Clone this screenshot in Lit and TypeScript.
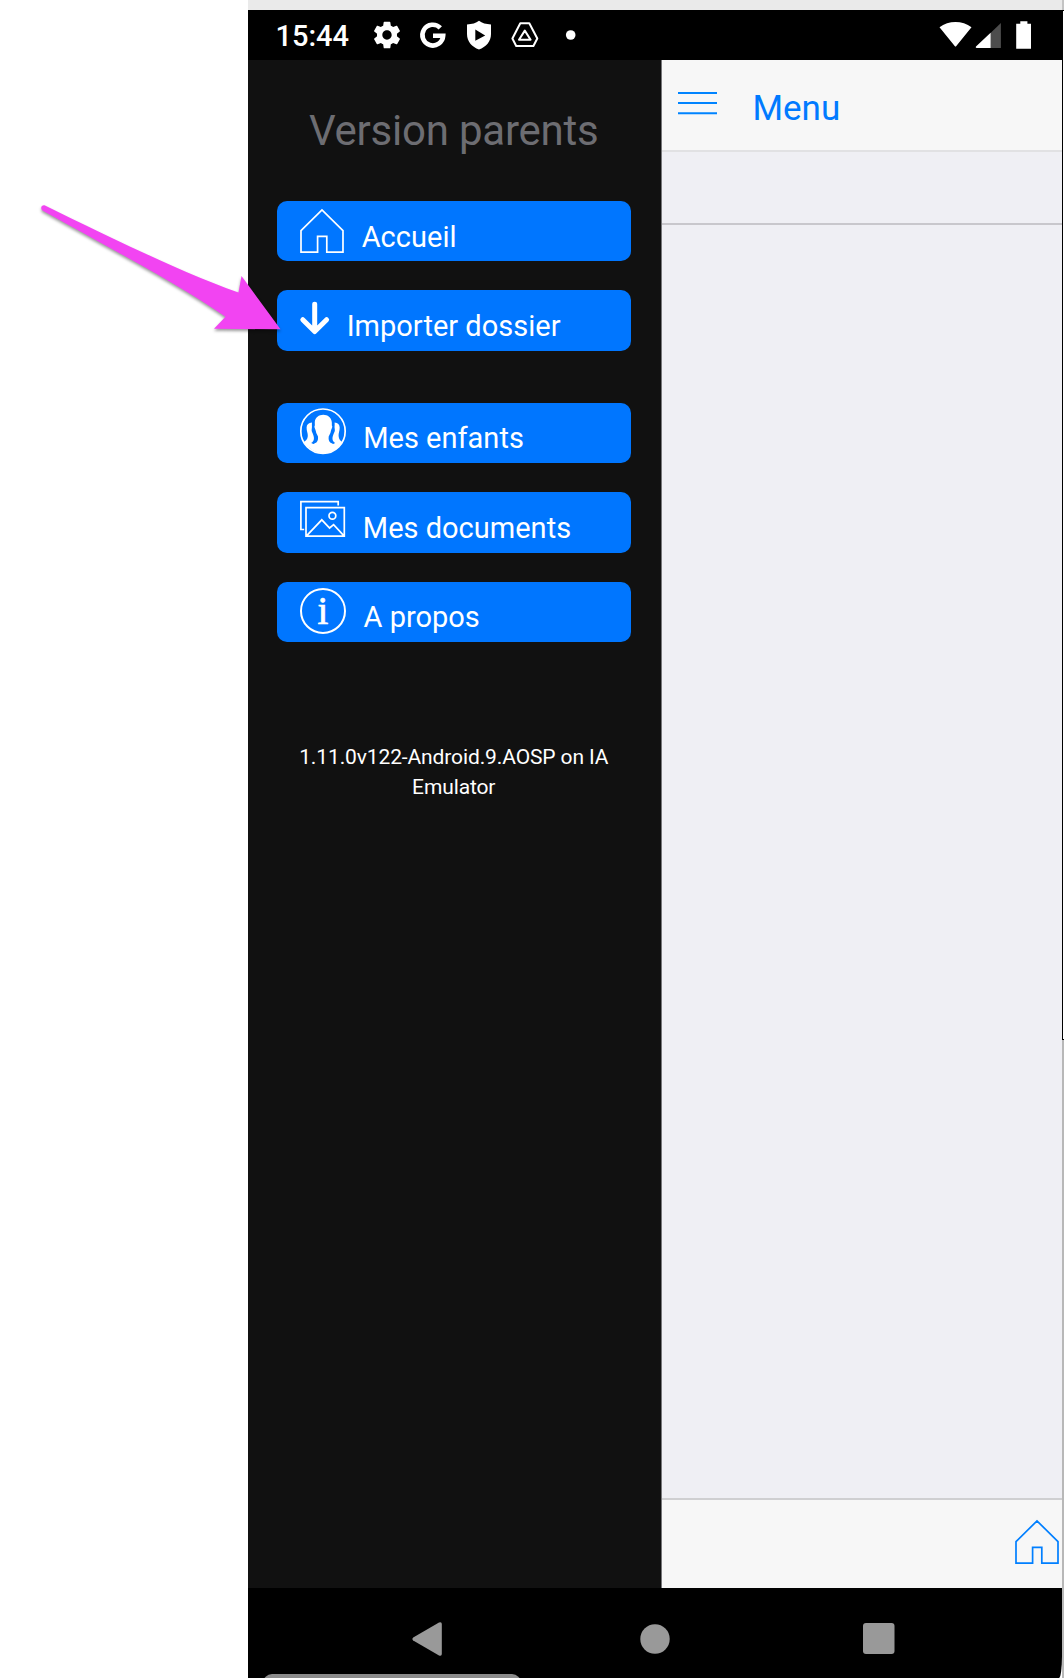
import { LitElement, html, svg, css } from "lit";
import { customElement } from "lit/decorators.js";

const HOME = "M1 29.6L22 8.9L43 29.6V51.2H26.8V35.4H17.6V51.2H1Z";

const icons = {
  home: svg`<path class="line" d=${HOME} />`,
  down: svg`<path class="bold" d="M14.7 14.2V41M2.8 29.7L14.7 41.6L26.6 29.7" />`,
  people: svg`
    <circle class="line" cx="23" cy="28.2" r="22.2" />
    <path class="fill" d="M23.3 11.7C19 11.7 15 14.5 14.8 19C14.7 21 15.2 22.5 14.4 23.6C14.6 25.6 15.4 26 15.8 28C16.3 31 17.6 32 18 33.6C18.3 36.5 17.8 38.2 16.4 39.4C13.6 41.2 11.6 41 8.6 43.9C16 51.9 30.5 52.2 38 43.9C35 41 33 41.2 30.2 39.4C28.8 38.2 28.4 36.5 28.7 33.6C29.2 32 30.4 31 30.9 28C31.3 26 32.1 25.6 32.3 23.6C31.6 22.5 32 21 31.8 19C31.4 14.5 27.6 11.7 23.3 11.7Z" />
    <path class="fill" d="M12 19.6C8.6 19.7 6.6 21.6 6.6 24.5C6.5 28 8 30 7.8 33C7.7 36.4 5.5 38 3.3 39.6L8.2 44.3C10 43.9 13 42.8 14.8 41.4C12.5 40.8 11.4 40.4 11.4 39.8C14.3 38.3 14.4 35 13.3 32C12.3 29 11.2 28.4 11.8 25.6C12.2 24 11.7 22.2 12 19.6Z" />
    <path class="fill" d="M34.6 19.6C38 19.7 39.6 21.6 39.7 24.5C39.7 28 38.4 30 38.6 33C38.8 36.4 40.6 38 42.8 39.6L38 44.3C36.2 43.9 33.6 42.8 31.8 41.4C34 40.8 35 40.4 35 39.8C32.2 38.3 32 35 33.2 32C34.3 29 35.3 28.4 34.7 25.6C34.3 24 34.9 22.2 34.6 19.6Z" />`,
  pictures: svg`
    <path class="line" d="M4.2 37.5H.9V9.7H38.2V13.6" />
    <path class="line" d="M6 15.6H44.3V44.2H6ZM6.5 43.8L21.8 27.8L29.6 36L33.6 32.6L44 43.8" />
    <circle class="line" cx="32.4" cy="23.7" r="3.4" />`,
  info: svg`
    <circle class="line thick" cx="23" cy="28.9" r="22" />
    <text class="letter" x="23" y="41.8">i</text>`,
};

@customElement("menu-button")
class MenuButton extends LitElement {
  static properties = { icon: {}, label: {}, span: { type: Number } };
  declare icon: keyof typeof icons;
  declare label: string;
  declare span: number;

  static styles = css`
    :host { display: block; }
    .button {
      display: flex; align-items: flex-start; gap: 18px; box-sizing: border-box;
      width: 100%; height: 60.3px; padding: 0 0 0 23px; border: 0; border-radius: 10px;
      background: #0076ff; color: #fff; text-align: left;
      font: 400 29px/34px Roboto, sans-serif; letter-spacing: 0.01px;
    }
    .label { padding-top: 18.7px; white-space: nowrap; }
    .icon { display: block; flex: none; height: 60px; overflow: visible; }
    .line { fill: none; stroke: #fff; stroke-width: 1.7; }
    .thick { stroke-width: 2; }
    .bold { fill: none; stroke: #fff; stroke-width: 5; stroke-linecap: round; stroke-linejoin: round; }
    .fill { fill: #fff; }
    .letter { font: 39px "Liberation Serif", serif; fill: #fff; stroke: #fff; stroke-width: 0.7; text-anchor: middle; letter-spacing: 0; }
  `;

  render() {
    return html`<button class="button">
      <svg class="icon" width=${this.span} height="60" viewBox="0 0 ${this.span} 60">${icons[this.icon]}</svg>
      <span class="label">${this.label}</span>
    </button>`;
  }
}

@customElement("status-bar")
class StatusBar extends LitElement {
  static styles = css`
    :host { display: flex; align-items: center; height: 50px; background: #000; color: #fff; }
    .time { width: 95px; padding: 2px 0 0 27.5px; font: 500 29px/34px Roboto, sans-serif; }
    .left { display: flex; gap: 14px; flex: 1; }
    .right { display: flex; padding-right: 31px; }
    svg { display: block; fill: #fff; }
    .ring { fill: none; stroke: #fff; stroke-width: 4.6; }
    .thin { fill: none; stroke: #fff; stroke-width: 2; stroke-linejoin: round; }
    .dim { fill: #4d4d4d; }
    .dark { fill: #000; }
  `;

  render() {
    return html`
      <span class="time">15:44</span>
      <div class="left">
        <svg width="32" height="32" viewBox="0 0 24 24"><path d="M19.43 12.98c.04-.32.07-.64.07-.98s-.03-.66-.07-.98l2.11-1.65c.19-.15.24-.42.12-.64l-2-3.46c-.12-.22-.39-.3-.61-.22l-2.49 1c-.52-.4-1.08-.73-1.69-.98l-.38-2.65C14.46 2.18 14.25 2 14 2h-4c-.25 0-.46.18-.49.42l-.38 2.65c-.61.25-1.17.59-1.69.98l-2.49-1c-.23-.09-.49 0-.61.22l-2 3.46c-.13.22-.07.49.12.64l2.11 1.65c-.04.32-.07.65-.07.98s.03.66.07.98l-2.11 1.65c-.19.15-.24.42-.12.64l2 3.46c.12.22.39.3.61.22l2.49-1c.52.4 1.08.73 1.69.98l.38 2.65c.03.24.24.42.49.42h4c.25 0 .46-.18.49-.42l.38-2.65c.61-.25 1.17-.59 1.69-.98l2.49 1c.23.09.49 0 .61-.22l2-3.46c.12-.22.07-.49-.12-.64l-2.11-1.65zM12 15.5c-1.93 0-3.5-1.57-3.5-3.5s1.57-3.5 3.5-3.5 3.5 1.57 3.5 3.5-1.57 3.5-3.5 3.5z" /></svg>
        <svg width="32" height="32" viewBox="0 0 32 32"><path class="ring" d="M23.3 8.9A10.4 10.4 0 1 0 26.2 16.7H16" /></svg>
        <svg width="32" height="32" viewBox="0 0 32 32"><path d="M16 1.7C19 4 23 5.2 28 5.4V15C28 22.5 23 28 16 30.6C9 28 4 22.5 4 15V5.4C9 5.2 13 4 16 1.7Z" /><path class="dark" d="M12.3 10.6L22.2 16.4L12.3 21.8Z" /></svg>
        <svg width="32" height="32" viewBox="0 0 32 32"><path class="thin" d="M11.3 4.3H20.3L28.3 19.5L24.4 27H7.2L3.4 19.5Z" /><path class="thin" d="M15.8 11.6L21.6 20.7H10Z" /></svg>
        <svg width="32" height="32" viewBox="0 0 32 32"><circle cx="15.7" cy="16" r="4.8" /></svg>
      </div>
      <div class="right">
        <svg width="33" height="50" viewBox="0 0 33 50"><path d="M.5 17.2C9.5 10.3 23.5 10.3 32.5 17.2L17.3 36Q16.5 37 15.7 36Z" /></svg>
        <svg width="44" height="50" viewBox="0 0 44 50"><path class="dim" d="M28.9 13V38H18V23.5Z" /><path d="M18.6 22.8V38H4.5Q3 37.4 4 36.6Z" /></svg>
        <svg width="15.5" height="50" viewBox="0 0 15.5 50"><path d="M4.3 11.3H11.4V13.8H15.3V38.7H0.2V13.8H4.3Z" /></svg>
      </div>`;
  }
}

@customElement("app-root")
class AppRoot extends LitElement {
  static styles = css`
    :host {
      display: flex; position: relative; box-sizing: border-box; width: 1064px; height: 1678px;
      padding-left: 248px; overflow: hidden; background: #fff; font-family: Roboto, sans-serif;
    }
    .phone { display: flex; flex-direction: column; width: 814px; }
    .window { height: 10px; background: #eaeaea; }
    .screen { display: flex; flex: 1; }
    .drawer { box-sizing: border-box; width: 413px; padding: 48px 30.5px 0 29px; background: #111; }
    .title { margin: 0 0 48px; text-align: center; color: #6d6d72; font: 400 42px/45px Roboto, sans-serif; letter-spacing: -0.22px; white-space: nowrap; }
    .group { display: flex; flex-direction: column; gap: 29.2px; margin-bottom: 52px; }
    .version { padding-top: 49px; color: #fff; text-align: center; font-size: 21px; line-height: 29.5px; letter-spacing: -0.12px; }
    .page { display: flex; flex-direction: column; flex: 1; border-left: 1px solid #77777a; background: #efeff4; }
    .header { display: flex; box-sizing: border-box; height: 92px; padding: 32px 0 0 16px; border-bottom: 2px solid #e1e1e3; background: #f7f7f7; color: #007aff; }
    .burger { width: 39px; height: 24px; stroke: #0084ff; stroke-width: 2; }
    .heading { padding-left: 35.5px; margin-top: -4px; font-size: 35px; line-height: 42px; }
    .strip { box-sizing: border-box; height: 73px; border-bottom: 2px solid #c8c7cc; }
    .content { flex: 1; }
    .toolbar { display: flex; box-sizing: border-box; justify-content: flex-end; height: 90px; padding: 12px 3.5px 0 0; border-top: 2px solid #cfcfd1; background: #f7f7f7; }
    .home { width: 44px; height: 60px; fill: none; stroke: #007fff; stroke-width: 1.7; }
    .nav { display: flex; align-items: center; box-sizing: border-box; height: 90px; padding: 11px 0 0 164px; background: #000; fill: #999; border-bottom-right-radius: 3px 22px; }
    .nav svg { display: block; flex: none; }
    .round { margin: 0 193.5px 0 197.5px; }
    .pill { position: absolute; left: 263px; top: 1674px; width: 258px; height: 20px; border-radius: 9px; background: #8c8c8c; }
    .edge { display: flex; flex-direction: column; width: 2px; background: #b8b8b8; }
    .corner { height: 10px; background: #c4c4c4; }
    .bright { box-sizing: border-box; height: 1030px; border: solid #000; border-width: 1px 0 1px 1px; background: #fff; }
    .arrow { position: absolute; left: 30px; top: 195px; fill: #f244f2; filter: drop-shadow(0 2px 1.5px rgba(0, 0, 0, 0.4)); }
  `;

  render() {
    return html`
      <div class="phone">
        <div class="window"></div>
        <status-bar></status-bar>
        <div class="screen">
          <nav class="drawer">
            <h1 class="title">Version parents</h1>
            <div class="group">
              <menu-button icon="home" label="Accueil" span="43.7"></menu-button>
              <menu-button icon="down" label="Importer dossier" span="28.7"></menu-button>
            </div>
            <div class="group">
              <menu-button icon="people" label="Mes enfants" span="45.2"></menu-button>
              <menu-button icon="pictures" label="Mes documents" span="44.8"></menu-button>
              <menu-button icon="info" label="A propos" span="45.5"></menu-button>
            </div>
            <div class="version">1.11.0v122-Android.9.AOSP on IA Emulator</div>
          </nav>
          <main class="page">
            <header class="header">
              <svg class="burger" viewBox="0 0 39 24"><path d="M0 1H39M0 11H39M0 21.2H39" /></svg>
              <span class="heading">Menu</span>
            </header>
            <div class="strip"></div>
            <div class="content"></div>
            <footer class="toolbar"><svg class="home" viewBox="0 0 44 60"><path d=${HOME} /></svg></footer>
          </main>
        </div>
        <div class="nav">
          <svg width="30" height="34" viewBox="0 0 30 34"><path d="M1.2 15.5L27 .5Q29.8 -.6 29.8 2V32Q29.8 34.6 27 33.5L1.2 18.5Q-.4 17 1.2 15.5Z" /></svg>
          <svg class="round" width="30" height="30" viewBox="0 0 30 30"><circle cx="15" cy="15" r="14.7" /></svg>
          <svg width="31.5" height="31" viewBox="0 0 31.5 31"><rect width="31.5" height="31" rx="3" /></svg>
        </div>
      </div>
      <div class="edge"><div class="corner"></div><div class="bright"></div></div>
      <div class="pill"></div>
      <svg class="arrow" width="256" height="145" viewBox="30 195 256 145">
        <path d="M45 205.5C105 235 185 274 238.5 292.5L241.5 276L280.5 329.3L214 328.8L225.5 316.8C180 285 115 251 42.4 210.5C39.8 208 41.8 204.6 45 205.5Z" />
      </svg>`;
  }
}
